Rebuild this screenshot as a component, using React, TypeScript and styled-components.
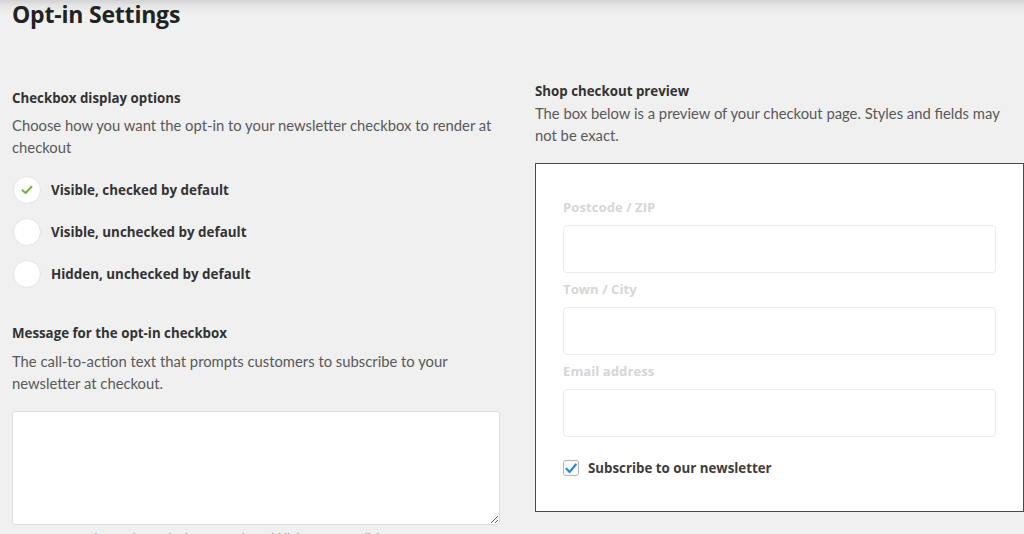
import React, { useState } from 'react';
import styled, { createGlobalStyle } from 'styled-components';

const GlobalStyle = createGlobalStyle`
  html, body {
    margin: 0;
    padding: 0;
    background: #f0f0f0;
    overflow: hidden;
  }
  body {
    font-family: Lato, "Open Sans", Arial, sans-serif;
    color: #333;
  }
`;

const boldFont = `"Open Sans", Lato, Arial, sans-serif`;

const Page = styled.div`
  position: relative;
  height: 534px;
  padding: 0 0 0 12px;
  box-sizing: border-box;
  background: linear-gradient(#d2d2d2 0px, #e6e6e6 6px, #f0f0f0 14px) no-repeat;
`;

const Title = styled.h1`
  margin: 0;
  font-family: ${boldFont};
  font-size: 23px;
  line-height: 29px;
  font-weight: 700;
  color: #222;
  letter-spacing: -0.2px;
`;

const Columns = styled.div`
  display: grid;
  grid-template-columns: 488px 489px;
  column-gap: 35px;
  align-items: start;
`;

const Column = styled.div<{ $top: number }>`
  padding-top: ${({ $top }) => $top}px;
  display: flex;
  flex-direction: column;
`;

const Heading = styled.h3<{ $mt?: number }>`
  margin: ${({ $mt }) => $mt || 0}px 0 0;
  font-family: ${boldFont};
  font-size: 13.3px;
  line-height: 20px;
  font-weight: 700;
  color: #333;
`;

const Description = styled.p<{ $mt?: number }>`
  margin: ${({ $mt }) => $mt || 0}px 0 0;
  font-size: 14.8px;
  line-height: 22px;
  color: #595959;
`;

const RadioList = styled.div`
  margin-top: 18px;
  display: flex;
  flex-direction: column;
  gap: 14px;
`;

const RadioRow = styled.label`
  display: flex;
  align-items: center;
  gap: 10px;
  height: 28px;
  font-family: ${boldFont};
  font-size: 13.4px;
  font-weight: 700;
  color: #333;
  cursor: pointer;
`;

const RadioCircle = styled.span`
  width: 28px;
  height: 28px;
  box-sizing: border-box;
  border-radius: 50%;
  background: #fff;
  border: 1px solid #e4e4e4;
  display: flex;
  align-items: center;
  justify-content: center;
  margin-left: 1px;
`;

const MessageArea = styled.textarea`
  margin-top: 17px;
  width: 100%;
  height: 114px;
  box-sizing: border-box;
  background: #fff;
  border: 1px solid #dedede;
  border-radius: 3px;
  resize: vertical;
  font-family: inherit;
  font-size: 14px;
  padding: 8px;
  outline: none;
`;

const Hint = styled.p`
  margin: 5px 0 0;
  font-size: 12px;
  line-height: 16px;
  color: #888;
`;

const PreviewBox = styled.div`
  margin-top: 17px;
  height: 349px;
  box-sizing: border-box;
  background: #fff;
  border: 1px solid #4a4a4a;
  padding: 33px 27px 0;
  display: flex;
  flex-direction: column;
`;

const FieldLabel = styled.div<{ $mt?: number }>`
  margin-top: ${({ $mt }) => $mt || 0}px;
  font-family: ${boldFont};
  font-size: 13.2px;
  line-height: 20px;
  font-weight: 700;
  color: #d6d6d6;
`;

const FieldInput = styled.div`
  margin-top: 8px;
  height: 48px;
  box-sizing: border-box;
  border: 1px solid #ededed;
  border-radius: 4px;
  background: #fff;
`;

const SubscribeRow = styled.label`
  margin-top: 21px;
  display: flex;
  align-items: center;
  gap: 9px;
  height: 20px;
  font-family: ${boldFont};
  font-size: 13.3px;
  font-weight: 700;
  color: #3d3d3d;
`;

const TickBox = styled.span`
  width: 16px;
  height: 16px;
  box-sizing: border-box;
  border: 1px solid #b5b5b5;
  border-radius: 3px;
  background: #fbfbfb;
  display: flex;
  align-items: center;
  justify-content: center;
`;

const options = [
  'Visible, checked by default',
  'Visible, unchecked by default',
  'Hidden, unchecked by default',
];

const App: React.FC = () => {
  const [selected, setSelected] = useState(0);

  return (
    <Page>
      <GlobalStyle />
      <Title>Opt-in Settings</Title>
      <Columns>
        <Column $top={59}>
          <Heading>Checkbox display options</Heading>
          <Description $mt={6}>
            Choose how you want the opt-in to your newsletter checkbox to render at checkout
          </Description>
          <RadioList>
            {options.map((label, i) => (
              <RadioRow key={label} onClick={() => setSelected(i)}>
                <RadioCircle>
                  {selected === i && (
                    <svg width="12" height="10" viewBox="0 0 12 10">
                      <path d="M1.5 5.2 L4.6 8 L10.5 1.8" fill="none" stroke="#72b043" strokeWidth="2" strokeLinecap="round" strokeLinejoin="round" />
                    </svg>
                  )}
                </RadioCircle>
                {label}
              </RadioRow>
            ))}
          </RadioList>
          <Heading $mt={35}>Message for the opt-in checkbox</Heading>
          <Description $mt={7}>
            The call-to-action text that prompts customers to subscribe to your newsletter at checkout.
          </Description>
          <MessageArea />
          <Hint>HTML tags can be used to style the text and to add links to your policies.</Hint>
        </Column>
        <Column $top={52}>
          <Heading>Shop checkout preview</Heading>
          <Description $mt={1}>
            The box below is a preview of your checkout page. Styles and fields may not be exact.
          </Description>
          <PreviewBox>
            <FieldLabel>Postcode / ZIP</FieldLabel>
            <FieldInput />
            <FieldLabel $mt={6}>Town / City</FieldLabel>
            <FieldInput />
            <FieldLabel $mt={6}>Email address</FieldLabel>
            <FieldInput />
            <SubscribeRow>
              <TickBox>
                <svg width="12" height="11" viewBox="0 0 12 11">
                  <path d="M1.5 5.8 L4.6 9 L10.8 1.5" fill="none" stroke="#2b8ad6" strokeWidth="2.2" strokeLinecap="round" strokeLinejoin="round" />
                </svg>
              </TickBox>
              Subscribe to our newsletter
            </SubscribeRow>
          </PreviewBox>
        </Column>
      </Columns>
    </Page>
  );
};

export default App;
